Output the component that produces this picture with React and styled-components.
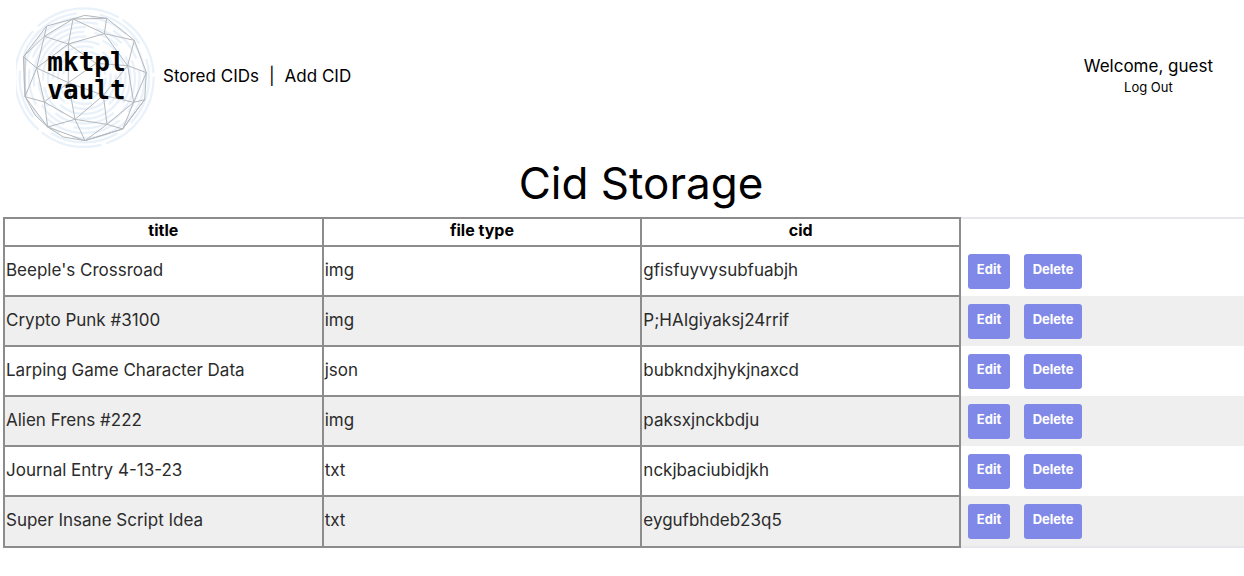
import React from "react";
import styled, { createGlobalStyle } from "styled-components";

const GlobalStyle = createGlobalStyle`
  * { box-sizing: border-box; }
  body {
    margin: 0;
    background: #fff;
    color: #000;
    font-family: Inter, "Liberation Sans", sans-serif;
    font-size: 17px;
    line-height: 20px;
    overflow-x: hidden;
  }
`;

const Header = styled.header`
  display: flex;
  align-items: center;
  padding: 0 31px 0 16px;
  height: 152px;
`;

const Logo = styled.svg`
  display: block;
  width: 140px;
  height: 144px;
  flex: none;
`;

const Nav = styled.nav`
  display: flex;
  gap: 10px;
  margin: 0 auto 0 7px;
`;

const NavLink = styled.a`
  color: inherit;
  text-decoration: none;
`;

const Account = styled.div`
  display: flex;
  flex-direction: column;
  align-items: center;
  gap: 1px;
`;

const LogOut = styled.button`
  border: 0;
  padding: 0;
  background: none;
  color: inherit;
  font: inherit;
  font-size: 13px;
  line-height: 20px;
`;

const Title = styled.h1`
  margin: 0;
  padding: 7px 0 10px 38px;
  text-align: center;
  font-size: 44px;
  line-height: 48px;
  font-weight: 400;
`;

const Table = styled.table`
  width: calc(100% - 3px);
  margin-left: 3px;
  table-layout: fixed;
  border-collapse: collapse;
  border: solid #e6e6ec;
  border-width: 2px 0;
`;

const Column = styled.col`
  width: ${(p) => (p.$data ? "25.7%" : "auto")};
`;

const HeadCell = styled.th`
  height: 28px;
  padding: 0 2px 4px;
  border: 2px solid #8c8c8c;
  font-size: 16px;
  font-weight: 700;
`;

const Row = styled.tr`
  height: 50px;
  &:nth-child(even) { background: #efefef; }
  &:last-child { height: 51px; }
`;

const Cell = styled.td`
  padding: 0 1px 3px;
  border: 2px solid #8c8c8c;
  color: #2b2b2b;
`;

const ActionCell = styled.td`
  padding: 0 7px;
`;

const Actions = styled.div`
  display: flex;
  gap: 14px;
`;

const ActionButton = styled.button`
  width: ${(p) => (p.$wide ? "58px" : "42px")};
  height: 35px;
  padding: 0 0 4px;
  border: 0;
  border-radius: 3px;
  background: #8189e8;
  color: #fff;
  font: inherit;
  font-size: 13px;
  font-weight: 700;
`;

const records = [
  ["Beeple's Crossroad", "img", "gfisfuyvysubfuabjh"],
  ["Crypto Punk #3100", "img", "P;HAIgiyaksj24rrif"],
  ["Larping Game Character Data", "json", "bubkndxjhykjnaxcd"],
  ["Alien Frens #222", "img", "paksxjnckbdju"],
  ["Journal Entry 4-13-23", "txt", "nckjbaciubidjkh"],
  ["Super Insane Script Idea", "txt", "eygufbhdeb23q5"],
];

const rings = [
  [208, "260 14 190 12 330 20"],
  [194, "150 50 210 70"],
  [181, "320 40 120 30"],
  [166, "110 36 240 50"],
  [152, "270 30 90 60"],
  [138, "80 40 190 30"],
  [124, "210 50 100 20"],
  [109, "90 20 140 60"],
  [94, "180 30 60 20"],
  [79, "70 30 120 20"],
  [64, "110 20 50 30"],
];

function VaultLogo() {
  return (
    <Logo viewBox="48 12 420 432" role="img" aria-label="mktpl vault">
      <g fill="none" stroke="#e9f2fa" strokeWidth="7">
        {rings.map(([r, dash]) => (
          <circle key={r} cx="253" cy="233" r={r} strokeDasharray={dash} />
        ))}
      </g>
      <path
        fill="none"
        stroke="#b4b8bc"
        strokeWidth="3"
        strokeLinejoin="round"
        d="M140 78 219 57 254 46 320 55 403 121 439 218 434 299 368 387 255 422 190 411 143 381 105 345 75 290 70 170Z
          M140 78 133 109 219 57 320 55 313 101 403 121 383 197 439 218
          M70 170 133 109 205 132 219 57 313 101 205 132 288 190 383 197 313 101
          M75 165 75 290 110 204 133 109 M70 170 110 204 205 132 205 248 110 204 133 306 75 290 143 381 133 306 205 248 288 190 310 286 205 248 225 358 133 306
          M310 286 383 197 401 307 310 286 321 373 225 358 310 286
          M143 381 225 358 255 422 321 373 368 387 401 307 321 373
          M439 218 401 307 434 299 M143 381 255 422 368 387 434 299"
      />
      <g
        fill="#000"
        fontFamily='"DejaVu Sans Mono", monospace'
        fontSize="78"
        fontWeight="700"
      >
        <text x="142" y="213">mktpl</text>
        <text x="142" y="297">vault</text>
      </g>
    </Logo>
  );
}

export default function App() {
  return (
    <>
      <GlobalStyle />
      <Header>
        <VaultLogo />
        <Nav>
          <NavLink href="#stored">Stored CIDs</NavLink>
          <span>|</span>
          <NavLink href="#add">Add CID</NavLink>
        </Nav>
        <Account>
          <span>Welcome, guest</span>
          <LogOut type="button">Log Out</LogOut>
        </Account>
      </Header>
      <main>
        <Title>Cid Storage</Title>
        <Table>
          <colgroup>
            <Column $data />
            <Column $data />
            <Column $data />
            <Column />
          </colgroup>
          <thead>
            <tr>
              <HeadCell scope="col">title</HeadCell>
              <HeadCell scope="col">file type</HeadCell>
              <HeadCell scope="col">cid</HeadCell>
              <td />
            </tr>
          </thead>
          <tbody>
            {records.map(([title, type, cid]) => (
              <Row key={cid}>
                <Cell>{title}</Cell>
                <Cell>{type}</Cell>
                <Cell>{cid}</Cell>
                <ActionCell>
                  <Actions>
                    <ActionButton type="button">Edit</ActionButton>
                    <ActionButton type="button" $wide>Delete</ActionButton>
                  </Actions>
                </ActionCell>
              </Row>
            ))}
          </tbody>
        </Table>
      </main>
    </>
  );
}
